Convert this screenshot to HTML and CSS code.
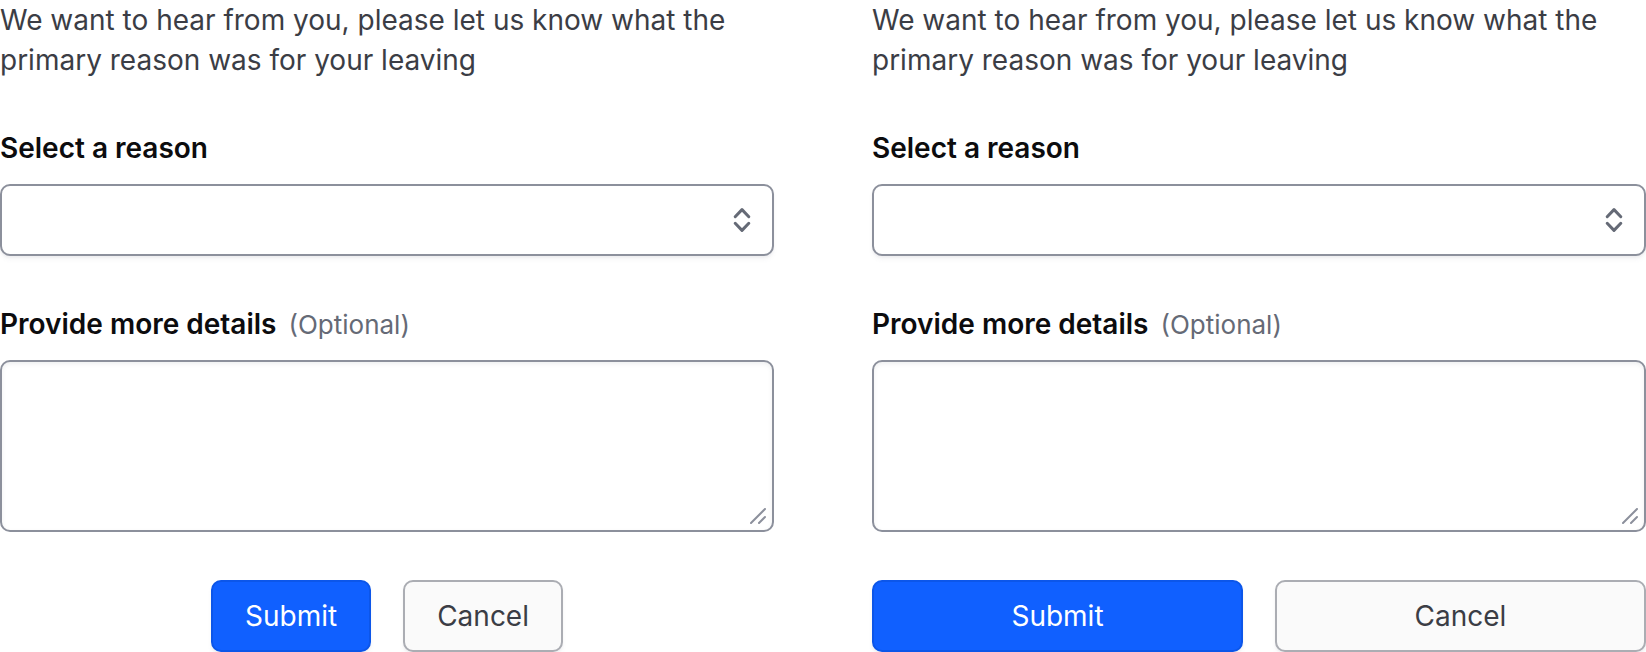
FILE: index.html
```html
<!DOCTYPE html>
<html lang="en">
<head>
<meta charset="utf-8">
<meta name="viewport" content="width=device-width, initial-scale=1">
<title>Leaving feedback</title>
<link rel="stylesheet" href="styles.css">
</head>
<body>
<main class="page">
  <form class="form">
    <p class="intro">We want to hear from you, please let us know what the primary reason was for your leaving</p>
    <div class="field">
      <label class="label" for="reason-a">Select a reason</label>
      <div class="control">
        <select class="input select" id="reason-a"><option></option></select>
        <svg class="chevrons" viewBox="0 0 20 28" aria-hidden="true"><path d="M3.2 10.7 10 3.6l6.8 7.1M3.2 17.3l6.8 7.1 6.8-7.1"/></svg>
      </div>
    </div>
    <div class="field">
      <label class="label" for="details-a">Provide more details <span class="optional">(Optional)</span></label>
      <div class="control">
        <textarea class="input textarea" id="details-a"></textarea>
        <svg class="grip" viewBox="0 0 16 16" aria-hidden="true"><path d="M1 15 15 1M9 15l6-6"/></svg>
      </div>
    </div>
    <div class="actions">
      <button class="button primary" type="submit">Submit</button>
      <button class="button" type="button">Cancel</button>
    </div>
  </form>
  <form class="form">
    <p class="intro">We want to hear from you, please let us know what the primary reason was for your leaving</p>
    <div class="field">
      <label class="label" for="reason-b">Select a reason</label>
      <div class="control">
        <select class="input select" id="reason-b"><option></option></select>
        <svg class="chevrons" viewBox="0 0 20 28" aria-hidden="true"><path d="M3.2 10.7 10 3.6l6.8 7.1M3.2 17.3l6.8 7.1 6.8-7.1"/></svg>
      </div>
    </div>
    <div class="field">
      <label class="label" for="details-b">Provide more details <span class="optional">(Optional)</span></label>
      <div class="control">
        <textarea class="input textarea" id="details-b"></textarea>
        <svg class="grip" viewBox="0 0 16 16" aria-hidden="true"><path d="M1 15 15 1M9 15l6-6"/></svg>
      </div>
    </div>
    <div class="actions fill">
      <button class="button primary" type="submit">Submit</button>
      <button class="button" type="button">Cancel</button>
    </div>
  </form>
</main>
</body>
</html>
```
FILE: styles.css
```css
* {
  box-sizing: border-box;
}

body {
  margin: 0;
  background: #fff;
  color: #3b3d45;
  font: 400 28px/40px Inter, sans-serif;
}

.page {
  display: grid;
  grid-template-columns: 1fr 1fr;
  gap: 98px;
}

.form {
  display: flex;
  flex-direction: column;
  gap: 48px;
  min-width: 0;
}

.intro {
  margin: 0;
}

.field {
  display: flex;
  flex-direction: column;
  gap: 16px;
}

.label {
  display: flex;
  align-items: baseline;
  gap: 12px;
  color: #0c0c0e;
  font-weight: 600;
}

.optional {
  color: #656a76;
  font-size: 26px;
  font-weight: 400;
  line-height: 36px;
}

.control {
  position: relative;
  display: flex;
}

.input {
  width: 100%;
  margin: 0;
  padding: 14px;
  border: 2px solid #8c909c;
  border-radius: 10px;
  background: #fff;
  color: #3b3d45;
  font: inherit;
}

.select {
  height: 72px;
  padding-right: 64px;
  appearance: none;
  box-shadow: 0 2px 2px rgba(101, 106, 118, 0.05), 0 4px 4px rgba(101, 106, 118, 0.05);
}

.textarea {
  height: 172px;
  resize: none;
  box-shadow: inset 0 2px 4px rgba(101, 106, 118, 0.1);
}

.chevrons,
.grip {
  position: absolute;
  fill: none;
  pointer-events: none;
  stroke-linecap: round;
  stroke-linejoin: round;
}

.chevrons {
  top: 22px;
  right: 22px;
  width: 20px;
  height: 28px;
  stroke: #656a76;
  stroke-width: 3;
}

.grip {
  right: 8px;
  bottom: 8px;
  width: 16px;
  height: 16px;
  stroke: #8c909c;
  stroke-width: 2;
}

.actions {
  display: flex;
  justify-content: center;
  gap: 32px;
}

.fill .button {
  flex: 1;
}

.button {
  padding: 14px 32px;
  border: 2px solid #abadb3;
  border-radius: 10px;
  background: #fafafa;
  box-shadow: 0 2px 2px rgba(101, 106, 118, 0.05), 0 4px 4px rgba(101, 106, 118, 0.05);
  color: #3b3d45;
  font: inherit;
}

.primary {
  border-color: #0c56e9;
  background: #1060ff;
  color: #fff;
}
```
